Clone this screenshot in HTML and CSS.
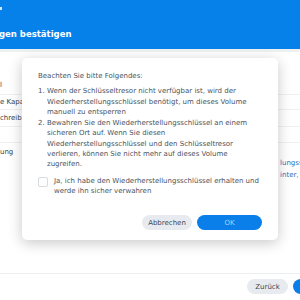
FILE: index.html
```html
<!DOCTYPE html>
<html lang="de">
  <head>
    <meta charset="UTF-8" />
    <meta name="viewport" content="width=device-width, initial-scale=1.0" />
    <title>Einstellungen bestätigen</title>
    <link rel="stylesheet" href="styles.css">
  </head>
  <body>
    <header class="topbar">
      <span class="topbar-dot"></span>
      <h1 class="topbar-title">gen bestätigen</h1>
    </header>

    <main class="summary">
      <div class="summary-row row-a"><span class="label">l</span><span class="value"></span></div>
      <div class="summary-row row-b"><span class="label">e Kapa</span><span class="value"></span></div>
      <div class="summary-row row-c"><span class="label">chreibu</span><span class="value"></span></div>
      <div class="summary-row row-d"><span class="label"></span><span class="value"></span></div>
      <div class="summary-row row-e">
        <span class="label">ung</span>
        <span class="value">
          <a class="link">lungss</a>
          <a class="link">inter,</a>
        </span>
      </div>
    </main>

    <footer class="wizard-footer">
      <button class="btn btn-grey">Zurück</button>
      <button class="btn btn-blue">Weiter</button>
    </footer>

    <!-- confirm dialog over the wizard -->
    <div class="dialog">
      <p class="dialog-intro">Beachten Sie bitte Folgendes:</p>
      <div class="dialog-list">
        <div class="dialog-item">
          <span class="num">1.</span>
          <span class="item-text">Wenn der Schlüsseltresor nicht verfügbar ist, wird der Wiederherstellungsschlüssel benötigt, um dieses Volume manuell zu entsperren</span>
        </div>
        <div class="dialog-item">
          <span class="num">2.</span>
          <span class="item-text">Bewahren Sie den Wiederherstellungsschlüssel an einem sicheren Ort auf. Wenn Sie diesen Wiederherstellungsschlüssel und den Schlüsseltresor verlieren, können Sie nicht mehr auf dieses Volume zugreifen.</span>
        </div>
      </div>
      <label class="check">
        <span class="check-box"></span>
        <span class="check-text">Ja, ich habe den Wiederherstellungsschlüssel erhalten und werde ihn sicher verwahren</span>
      </label>
      <div class="dialog-buttons">
        <button class="btn btn-grey btn-cancel">Abbrechen</button>
        <button class="btn btn-blue btn-ok">OK</button>
      </div>
    </div>
  </body>
</html>
```

FILE: styles.css
```css
body {
  margin: 0;
  width: 300px;
  height: 300px;
  overflow: hidden;
  position: relative;
  background: #fff;
  font-family: "DejaVu Sans", Verdana, sans-serif;
  font-size: 7px;
  color: #4a5360;
  box-sizing: border-box;
}

/* Blue title bar */
.topbar {
  height: 52px;
  box-sizing: border-box;
  background-color: #0781ea;
  border-bottom: 3px solid #eef0f2;
  display: flex;
  flex-direction: column;
  padding: 7px 0 0 0;
}
.topbar-dot {
  width: 2px;
  height: 3px;
  background: #cfe6fb;
  margin-bottom: 19px;
}
.topbar-title {
  margin: 0 0 0 -1px;
  font-size: 8.5px;
  font-weight: bold;
  color: #fff;
  line-height: 10px;
}

/* Summary table behind the dialog */
.summary {
  height: 222px;
  padding-top: 24px;
  box-sizing: border-box;
  border-bottom: 1px solid #eceef0;
}
.summary-row {
  display: flex;
  border-bottom: 1px solid #eef0f2;
}
.summary-row .label {
  width: 120px;
  flex-shrink: 0;
  display: flex;
  align-items: center;
  color: #3a3f45;
}
.summary-row .value {
  flex-grow: 1;
  display: flex;
  flex-direction: column;
  padding-left: 160px;
}
.row-a { height: 18px; }
.row-b { height: 14px; }
.row-c { height: 16px; }
.row-d { height: 15px; }
.row-e {
  height: 45px;
  border-bottom: none;
}
.row-e .label {
  align-items: flex-start;
  padding-top: 5px;
}
.row-e .value {
  padding-top: 14px;
  line-height: 12px;
}
.link {
  color: #2f6fc0;
  white-space: nowrap;
}

/* Footer buttons */
.wizard-footer {
  display: flex;
  gap: 5px;
  padding: 5px 0 0 247px;
}
.btn {
  font-family: "DejaVu Sans", Verdana, sans-serif;
  font-size: 7px;
  border: none;
  border-radius: 8px;
  height: 15px;
  padding: 0;
  flex-shrink: 0;
  white-space: nowrap;
}
.btn-grey {
  background: #e7ebef;
  color: #3e4854;
  width: 41px;
}
.btn-blue {
  background: #0b7fe9;
  color: #fff;
  width: 60px;
}

/* Confirm dialog (modal) */
.dialog {
  position: absolute;
  left: 22px;
  top: 58px;
  width: 256px;
  height: 182px;
  box-sizing: border-box;
  padding: 13px 16px 10px 16px;
  background: #fff;
  border-radius: 5px;
  box-shadow: 0 3px 14px rgba(0, 0, 0, 0.22);
  line-height: 10.3px;
  display: flex;
  flex-direction: column;
}
.dialog-intro {
  margin: 0 0 5px 0;
}
.dialog-list {
  display: flex;
  flex-direction: column;
  gap: 1px;
}
.dialog-item {
  display: flex;
}
.num {
  width: 9px;
  flex-shrink: 0;
}
.check {
  display: flex;
  align-items: flex-start;
  margin-top: 6px;
}
.check-box {
  width: 8px;
  height: 8px;
  border: 1px solid #d6dbe0;
  border-radius: 2px;
  flex-shrink: 0;
  margin: 1px 6px 0 0;
}
.dialog-buttons {
  margin-top: auto;
  display: flex;
  justify-content: flex-end;
  gap: 5px;
}
.btn-cancel {
  width: 50px;
}
.btn-ok {
  width: 65px;
  color: #a9d2fa;
}
```
